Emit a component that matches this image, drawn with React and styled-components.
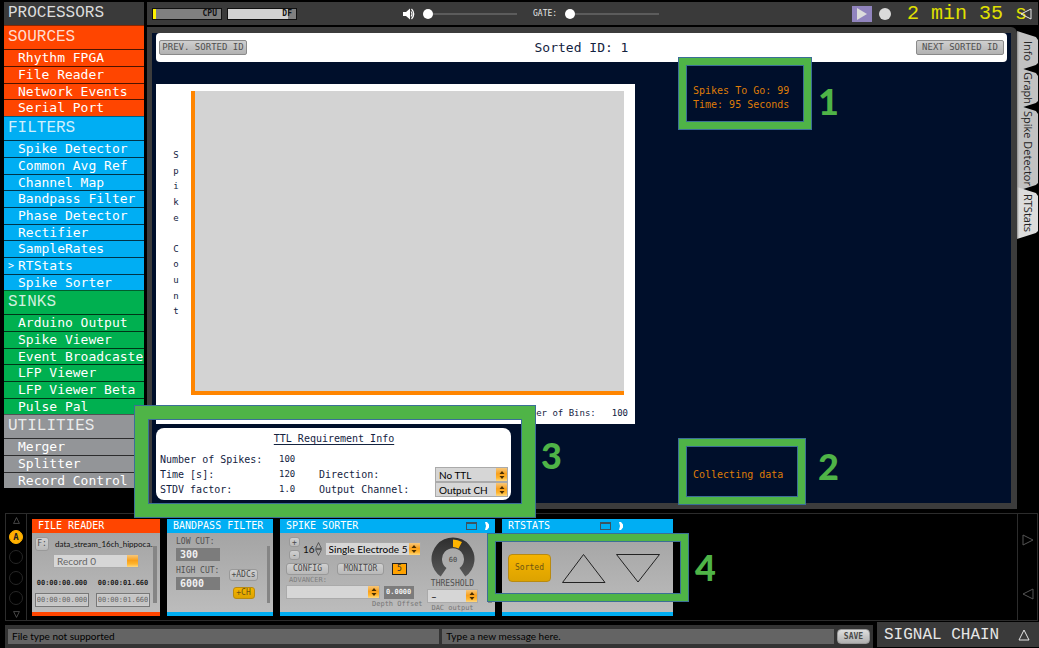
import React from "react";
import styled, { createGlobalStyle, css } from "styled-components";

const mono = `"DejaVu Sans Mono", "Liberation Mono", monospace`;
const thinMono = `"Liberation Mono", "DejaVu Sans Mono", monospace`;
const sans = `Lato, "Open Sans", sans-serif`;

const orangeGloss = "linear-gradient(#f7c77a, #f9a01b 45%, #ffb52e 75%, #ffd980)";
const green = "#4fb447";

const GlobalStyle = createGlobalStyle`
  * { box-sizing: border-box; }
  body { margin: 0; background: #000; font-family: ${mono}; }
  button, input, select { font: inherit; color: inherit; margin: 0; padding: 0; border: 0; background: none; border-radius: 0; min-width: 0; }
  h1, h2, h3, ul, p { margin: 0; padding: 0; font-weight: normal; list-style: none; }
  svg { display: block; flex: none; }
`;

const Shell = styled.div`
  position: relative;
  display: flex;
  flex-direction: column;
  min-height: 100vh;
  overflow: hidden;
`;

const Upper = styled.div`
  flex: 1;
  display: flex;
  gap: 3px;
  padding: 2px 0 0 4px;
  margin-bottom: 4px;
`;

/* Processor list */
const Sidebar = styled.nav`
  flex: 0 0 140px;
  overflow: hidden;
`;
const SideTitle = styled.h1`
  height: 23px;
  padding-left: 4px;
  font: 16px/22px ${thinMono};
  color: #dcdcdc;
  background: #3a3a3a;
`;
const Group = styled.section`
  background: ${(p) => p.$color};
`;
const GroupTitle = styled.h2`
  height: 24px;
  padding-left: 4px;
  border-top: 1px solid rgba(0, 0, 0, 0.45);
  font: 16px/22px ${thinMono};
  color: #ffffffd0;
`;
const Item = styled.li`
  height: 17px;
  padding-left: ${(p) => (p.$open ? 4 : 14)}px;
  border-top: 1px solid rgba(0, 0, 0, 0.7);
  font-size: 13px;
  line-height: 15px;
  color: #fff;
  white-space: nowrap;
  display: flex;
  &:nth-child(3n) { height: 16px; }
`;
const Marker = styled.span`
  width: 10px;
  flex: none;
  font-size: 10px;
`;

/* Control bar */
const Workspace = styled.div`
  flex: 1;
  min-width: 0;
  display: flex;
  flex-direction: column;
  gap: 2px;
`;
const ControlBar = styled.header`
  position: relative;
  height: 23px;
  margin-right: 1px;
  padding: 0 11px 0 5px;
  display: flex;
  align-items: center;
  background: #3a3a3a;
`;
const Meter = styled.div`
  width: 70px;
  height: 12px;
  margin-right: 5px;
  padding-right: 4px;
  border: 1px solid #111;
  background: linear-gradient(90deg, ${(p) => p.$fill} ${(p) => p.$level}px, #808080 ${(p) => p.$level}px);
  font: bold 8px/10px ${mono};
  color: #111;
  text-align: right;
`;
const SliderField = styled.label`
  display: flex;
  align-items: center;
  gap: 8px;
  font-size: 8px;
  color: #e6e6e6;
  margin-left: ${(p) => p.$before}px;
`;
const Slider = styled.input.attrs({ type: "range" })`
  appearance: none;
  width: 94px;
  height: 12px;
  background: linear-gradient(#5c5c5c, #5c5c5c) center / 100% 2px no-repeat;
  &::-webkit-slider-thumb {
    appearance: none;
    width: 10px;
    height: 10px;
    border-radius: 50%;
    background: #fff;
  }
`;
const Transport = styled.div`
  margin-left: auto;
  display: flex;
  align-items: center;
`;
const PlayButton = styled.button`
  width: 20px;
  height: 16px;
  display: grid;
  place-items: center;
  background: #9184be;
`;
const RecordButton = styled.button`
  width: 12px;
  height: 12px;
  margin: 0 16px 0 7px;
  border-radius: 50%;
  background: #dadada;
`;
const Clock = styled.time`
  font: 20px/22px ${thinMono};
  color: #e0e000;
  white-space: pre;
`;
const CollapseButton = styled.button`
  position: absolute;
  right: 6px;
  top: 6px;
`;

/* Visualiser frame */
const Stage = styled.div`
  flex: 1;
  display: flex;
`;
const Frame = styled.div`
  flex: 1;
  min-width: 0;
  display: flex;
  padding: 6px 6px 6px 5px;
  border-radius: 0 6px 0 0;
  background: #3c3c3c;
`;
const Canvas = styled.main`
  flex: 1;
  min-width: 0;
  display: flex;
  flex-direction: column;
  padding: 0 4px;
  background: #000f2b;
  color: #14233f;
`;
const SortHeader = styled.div`
  display: flex;
  align-items: center;
  justify-content: space-between;
  height: 29px;
  padding: 0 3px;
  border-radius: 4px;
  background: #fff;
`;
const SortTitle = styled.h2`
  font-size: 13px;
`;
const SortButton = styled.button`
  width: 88px;
  height: 15px;
  border: 1px solid #8a8a8a;
  border-radius: 2px;
  background: linear-gradient(#cfcfcf, #b2b2b2);
  font-size: 9px;
  line-height: 13px;
  color: #505050;
  white-space: nowrap;
`;
const Columns = styled.div`
  flex: 1;
  display: grid;
  grid-template-columns: minmax(0, 479fr) minmax(0, 372fr);
  padding-top: 22px;
`;
const Left = styled.div`
  display: flex;
  flex-direction: column;
  gap: 4px;
  padding-bottom: 3px;
`;
const PlotCard = styled.section`
  flex: 1;
  min-height: 340px;
  display: grid;
  grid-template: 1fr 29px / 35px 1fr;
  padding: 7px 11px 0 0;
  background: #fff;
`;
const AxisLabel = styled.div`
  height: 172px;
  margin-top: 56px;
  padding-left: 5px;
  display: flex;
  flex-direction: column;
  align-items: center;
  font-size: 9px;
  line-height: 16px;
  span { flex: 1; min-height: 0; }
`;
const Plot = styled.div`
  border: solid #ff8500;
  border-width: 0 0 4px 4px;
  background: #d3d3d3;
`;
const Bins = styled.div`
  grid-column: 2;
  display: flex;
  justify-content: flex-end;
  align-items: center;
  gap: 16px;
  padding: 7px 0 0;
  margin-right: -4px;
  font-size: 9px;
`;
const TtlCard = styled.section`
  width: 100%;
  max-width: 355px;
  height: 72px;
  padding: 4px 3px 0 4px;
  border-radius: 8px;
  background: #fff;
  font-size: 10px;
`;
const TtlTitle = styled.h3`
  margin-bottom: 6px;
  text-align: center;
  font-size: 10px;
  line-height: 14px;
  text-decoration: underline;
  text-underline-offset: 2px;
`;
const TtlGrid = styled.div`
  display: grid;
  grid-template-columns: 119px 40px 1fr 73px;
  grid-auto-rows: 15px;
  line-height: 15px;
`;
const TtlValue = styled.output`
  font-size: 9px;
`;
const Status = styled.div`
  display: flex;
  flex-direction: column;
  justify-content: space-between;
  padding: 0 0 21px 58px;
  font-size: 10px;
  line-height: 14px;
  color: #df7c08;
`;

/* Drop-down with the glossy arrow cap */
const Picker = styled.span`
  display: flex;
  width: ${(p) => p.$w}px;
  height: ${(p) => p.$h || 14}px;
  border: 1px solid #aaa;
  background: #d6d6d6;
  font: 10px/12px ${sans};
  color: ${(p) => p.$color || "#000"};
  select { appearance: none; flex: 1; padding-left: 3px; outline: 0; }
`;
const PickerCap = styled.span`
  width: 11px;
  display: grid;
  place-items: center;
  background: ${orangeGloss};
`;

function Select({ label, id, text, w, h, color, plain }) {
  return (
    <Picker $w={w} $h={h} $color={color}>
      <select id={id} aria-label={label}>
        <option>{text}</option>
      </select>
      <PickerCap>
        {!plain && (
          <svg width="6" height="8" viewBox="0 0 6 8" fill="#4a2e00">
            <path d="M3 0L5.5 3H.5zM3 8L.5 5h5z" />
          </svg>
        )}
      </PickerCap>
    </Picker>
  );
}

/* Tabs on the right edge */
const Tabs = styled.div`
  width: 22px;
  padding: 4px 1px 0 0;
  display: flex;
  flex-direction: column;
`;
const Tab = styled.button`
  height: ${(p) => p.$h}px;
  margin-bottom: -4px;
  writing-mode: vertical-rl;
  font: 11px/20px "Open Sans", sans-serif;
  color: #222;
  background: linear-gradient(90deg, #8f8f8f, ${(p) => (p.$active ? "#dcdcdc" : "#c2c2c2")} 2px);
  clip-path: polygon(0 0, 90% 6px, 100% 9px, 100% calc(100% - 8px), 90% calc(100% - 6px), 0 100%);
`;

/* Signal chain */
const Chain = styled.section`
  display: flex;
  margin: 0 1px 0 5px;
  height: 108px;
  border: 1px solid #2c2c2c;
  background: #000;
`;
const Slots = styled.div`
  width: 21px;
  border-right: 1px solid #2c2c2c;
  display: flex;
  flex-direction: column;
  align-items: center;
  justify-content: space-between;
  padding: 3px 0 2px;
`;
const Slot = styled.button`
  width: 14px;
  height: 14px;
  border: 1px solid #262626;
  border-radius: 50%;
  font: bold 9px/12px ${mono};
  ${(p) => p.$on && css`background: #ffb000; border-color: #ffb000; color: #222;`}
`;
const Editors = styled.div`
  flex: 1;
  display: flex;
  align-items: flex-start;
  gap: 7px;
  padding: 5px 0 0 5px;
`;
const Arrows = styled.div`
  width: 20px;
  border-left: 1px solid #2c2c2c;
  display: flex;
  flex-direction: column;
  align-items: center;
  justify-content: space-between;
  padding: 20px 0;
`;
const Editor = styled.article`
  flex: none;
  width: ${(p) => p.$w}px;
  height: 97px;
  display: flex;
  flex-direction: column;
  background: linear-gradient(#a0a0a0, #bcbcbc);
  border-bottom: 4px solid ${(p) => p.$color};
`;
const EditorHead = styled.header`
  height: 14px;
  padding: 0 ${(p) => p.$end || 0}px 0 6px;
  display: flex;
  align-items: center;
  gap: 8px;
  background: ${(p) => p.$color};
  color: #fff;
`;
const EditorTitle = styled.h3`
  flex: 1;
  font-size: 10px;
  line-height: 14px;
`;
const EditorBody = styled.div`
  flex: 1;
  display: flex;
  padding: 4px 3px 0 ${(p) => p.$start}px;
  gap: ${(p) => p.$gap || 0}px;
`;
const Grip = styled.span`
  width: 4px;
  height: 57px;
  margin: 9px 0 0 auto;
  background: #858585;
`;
const Col = styled.div`
  display: flex;
  flex-direction: column;
  align-items: ${(p) => p.$align || "flex-start"};
  width: ${(p) => (p.$w ? p.$w + "px" : "auto")};
  gap: ${(p) => p.$gap || 0}px;
  padding-top: ${(p) => p.$top || 0}px;
`;
const Row = styled.div`
  display: flex;
  align-items: center;
  gap: ${(p) => p.$gap || 0}px;
  padding-left: ${(p) => p.$start || 0}px;
`;
const SmallButton = styled.button`
  width: ${(p) => p.$w}px;
  height: ${(p) => p.$h || 12}px;
  border: 1px solid ${(p) => (p.$on ? "#b98a10" : "#999")};
  border-radius: 3px;
  background: ${(p) => (p.$on ? "linear-gradient(#f5b400, #dda300)" : "linear-gradient(#d0d0d0, #b9b9b9)")};
  font-size: 8px;
  line-height: 10px;
  color: ${(p) => (p.$on ? "#6d5510" : "#4a4a4a")};
  white-space: nowrap;
`;
const FileName = styled.span`
  white-space: nowrap;
  font: 8px/14px ${sans};
  color: #111;
`;
const TimeText = styled.span`
  width: 54px;
  text-align: center;
  font: bold 7px/12px ${mono};
  color: #222;
`;
const TimeField = styled.input`
  width: 54px;
  height: 14px;
  border: 1px solid #777;
  outline: 1px solid #ccc;
  outline-offset: -2px;
  background: #c6c6c6;
  text-align: center;
  font: 7px/12px ${mono};
  color: #666;
`;
const Caption = styled.label`
  font-size: ${(p) => p.$size || 8}px;
  line-height: 10px;
  color: ${(p) => p.$color || "#505050"};
  white-space: nowrap;
`;
const ValueField = styled.input`
  width: ${(p) => p.$w}px;
  height: ${(p) => p.$h || 13}px;
  padding-left: ${(p) => p.$pad || 4}px;
  background: #7c7c7c;
  font: bold ${(p) => p.$size || 10}px/12px ${mono};
  color: #f0f0f0;
`;
const Channel = styled.span`
  width: 15px;
  height: 12px;
  border: 1px solid #222;
  background: #ffa200;
  font: 8px/10px ${mono};
  text-align: center;
  color: #333;
`;
const Count = styled.span`
  font: 10px/14px ${sans};
  color: #111;
`;
const SortedButton = styled(SmallButton)`
  border-radius: 4px;
`;

/* Message bar */
const Footer = styled.footer`
  display: flex;
  gap: 4px;
  height: 26px;
  margin-top: 1px;
  padding-left: 5px;
`;
const Messages = styled.div`
  flex: 1;
  display: flex;
  align-items: center;
  gap: 3px;
  height: 23px;
  margin-top: 3px;
  padding: 0 3px;
  background: #333;
`;
const Message = styled.input`
  flex: ${(p) => p.$grow} 1 0;
  height: 15px;
  padding-left: 4px;
  background: #646464;
  font: 10px/15px ${sans};
  color: #000;
`;
const SaveButton = styled(SmallButton)`
  border-radius: 4px;
  font-weight: bold;
  background: linear-gradient(#dedede, #b0b0b0);
`;
const ChainTitle = styled.button`
  width: 162px;
  height: 25px;
  padding: 0 9px 0 7px;
  display: flex;
  align-items: center;
  justify-content: space-between;
  background: #3a3a3a;
  font: 16px/24px ${thinMono};
  color: #e6e6e6;
`;

/* Numbered call-outs drawn over the interface */
const Callout = styled.div`
  position: absolute;
  left: ${(p) => p.$x}px;
  top: ${(p) => p.$y}px;
  width: ${(p) => p.$w}px;
  height: ${(p) => p.$h}px;
  border: 1px solid #3b6f96;
  box-shadow: inset 0 0 0 ${(p) => p.$t - 2}px ${green}, inset 0 0 0 ${(p) => p.$t - 1}px #3b6f96;
  pointer-events: none;
`;
const CalloutNumber = styled.span`
  position: absolute;
  left: ${(p) => p.$x}px;
  top: ${(p) => p.$y}px;
  font: 900 36px/36px Lato, sans-serif;
  color: ${green};
`;

const turns = { up: 0, right: 90, down: 180, left: 270 };
function Tri({ dir = "up", size = 12, color = "#555" }) {
  return (
    <svg width={size} height={size} viewBox="0 0 12 12" fill="none" stroke={color}>
      <path d="M6 1L11 11H1z" transform={`rotate(${turns[dir]} 6 6)`} />
    </svg>
  );
}

function HeadIcons() {
  return (
    <>
      <svg width="11" height="9" viewBox="0 0 11 9">
        <rect x=".5" y=".5" width="10" height="7" fill="none" stroke="#3c5460" />
        <path d="M0 0h11v2H0z" fill="#3c5460" />
      </svg>
      <svg width="4" height="8" viewBox="0 0 4 8" fill="#fff">
        <path d="M0 0h2l2 2.500v3L2 8H0l1-4z" />
      </svg>
    </>
  );
}

function Knob() {
  return (
    <svg width="44" height="42" viewBox="0 0 44 42">
      <defs>
        <linearGradient id="knob" x1="0" y1="0" x2="0" y2="1">
          <stop offset="0" stopColor="#2e2e2e" />
          <stop offset="1" stopColor="#585858" />
        </linearGradient>
      </defs>
      <path
        d="M9.7 39.6A21.5 21.5 0 1 1 34.3 39.6L28.5 31A11 11 0 1 0 15.500 31z"
        fill="url(#knob)"
      />
      <path d="M22 2.500A19.5 19.5 0 0 1 31 5L27.500 11.500A12 12 0 0 0 22 10z" fill="#ffb400" />
      <text x="22" y="25" textAnchor="middle" fontSize="7" fontFamily="DejaVu Sans Mono" fill="#444">
        60
      </text>
    </svg>
  );
}

const groups = [
  ["SOURCES", "#ff4500", ["Rhythm FPGA", "File Reader", "Network Events", "Serial Port"]],
  [
    "FILTERS",
    "#00aef3",
    ["Spike Detector", "Common Avg Ref", "Channel Map", "Bandpass Filter", "Phase Detector", "Rectifier", "SampleRates", "RTStats", "Spike Sorter"],
  ],
  ["SINKS", "#00b050", ["Arduino Output", "Spike Viewer", "Event Broadcaste", "LFP Viewer", "LFP Viewer Beta", "Pulse Pal"]],
  ["UTILITIES", "#939598", ["Merger", "Splitter", "Record Control"]],
];

const callouts = [
  { n: 1, x: 678, y: 57, w: 134, h: 73, t: 9, nx: 818, ny: 83 },
  { n: 2, x: 678, y: 438, w: 128, h: 67, t: 9, nx: 818, ny: 448 },
  { n: 3, x: 134, y: 405, w: 402, h: 113, t: 15, nx: 541, ny: 437 },
  { n: 4, x: 487, y: 533, w: 202, h: 69, t: 9, nx: 695, ny: 549 },
];

export default function App() {
  return (
    <Shell>
      <GlobalStyle />
      <Upper>
        <Sidebar>
          <SideTitle>PROCESSORS</SideTitle>
          {groups.map(([title, color, items]) => (
            <Group key={title} $color={color}>
              <GroupTitle>{title}</GroupTitle>
              <ul>
                {items.map((item) => (
                  <Item key={item} $open={item === "RTStats"}>
                    {item === "RTStats" && <Marker>&gt;</Marker>}
                    {item}
                  </Item>
                ))}
              </ul>
            </Group>
          ))}
        </Sidebar>

        <Workspace>
          <ControlBar>
            <Meter $fill="#fff200" $level={3}>CPU</Meter>
            <Meter $fill="#d2d2d2" $level={60}>DF</Meter>
            <SliderField $before={101}>
              <svg width="12" height="12" viewBox="0 0 12 12" fill="#fff" aria-label="Volume">
                <path d="M0 4h3l4-3.5v11L3 8H0z" />
                <path d="M8 3.5Q10 6 8 8.5M8.500 1Q13 6 8.500 11" fill="none" stroke="#fff" strokeWidth="1.200" />
              </svg>
              <Slider defaultValue={0} aria-label="Volume" />
            </SliderField>
            <SliderField $before={16}>
              GATE:
              <Slider defaultValue={0} />
            </SliderField>
            <Transport>
              <PlayButton aria-label="Play">
                <svg width="10" height="12" viewBox="0 0 10 12" fill="#dcdcdc">
                  <path d="M0 0l10 6-10 6z" />
                </svg>
              </PlayButton>
              <RecordButton aria-label="Record" />
              <Clock>2 min 35 s</Clock>
            </Transport>
            <CollapseButton aria-label="Collapse">
              <Tri dir="left" color="#e8e8e8" />
            </CollapseButton>
          </ControlBar>

          <Stage>
            <Frame>
              <Canvas>
                <SortHeader>
                  <SortButton>PREV. SORTED ID</SortButton>
                  <SortTitle>Sorted ID: 1</SortTitle>
                  <SortButton>NEXT SORTED ID</SortButton>
                </SortHeader>
                <Columns>
                  <Left>
                    <PlotCard>
                      <AxisLabel>
                        {[..."Spike Count"].map((c, i) => (
                          <span key={i}>{c}</span>
                        ))}
                      </AxisLabel>
                      <Plot />
                      <Bins>
                        <span>Number of Bins:</span>
                        <span>100</span>
                      </Bins>
                    </PlotCard>
                    <TtlCard>
                      <TtlTitle>TTL Requirement Info</TtlTitle>
                      <TtlGrid>
                        <span>Number of Spikes:</span>
                        <TtlValue>100</TtlValue>
                        <span />
                        <span />
                        <span>Time [s]:</span>
                        <TtlValue>120</TtlValue>
                        <label htmlFor="direction">Direction:</label>
                        <Select id="direction" text="No TTL" w={73} h={15} />
                        <span>STDV factor:</span>
                        <TtlValue>1.0</TtlValue>
                        <label htmlFor="output">Output Channel:</label>
                        <Select id="output" text="Output CH" w={73} h={15} />
                      </TtlGrid>
                    </TtlCard>
                  </Left>
                  <Status>
                    <div>
                      <p>Spikes To Go: 99</p>
                      <p>Time: 95 Seconds</p>
                    </div>
                    <p>Collecting data</p>
                  </Status>
                </Columns>
              </Canvas>
            </Frame>
            <Tabs>
              <Tab $h={40}>Info</Tab>
              <Tab $h={42}>Graph</Tab>
              <Tab $h={86}>Spike Detector</Tab>
              <Tab $h={52} $active>RTStats</Tab>
            </Tabs>
          </Stage>
        </Workspace>
      </Upper>

      <Chain>
        <Slots>
          <Tri size={7} color="#777" />
          <Slot $on>A</Slot>
          <Slot aria-label="Chain B" />
          <Slot aria-label="Chain C" />
          <Slot aria-label="Chain D" />
          <Tri size={7} dir="down" color="#777" />
        </Slots>
        <Editors>
          <Editor $w={128} $color="#ff4500">
            <EditorHead $color="#ff4500">
              <EditorTitle>FILE READER</EditorTitle>
            </EditorHead>
            <EditorBody $start={3}>
              <Col $w={116}>
                <Row $gap={6}>
                  <SmallButton $w={14} $h={14}>F:</SmallButton>
                  <FileName>data_stream_16ch_hippoca...</FileName>
                </Row>
                <Col $top={3}>
                  <Row $start={18}>
                    <Select label="Record" text="Record 0" w={86} color="#666" plain />
                  </Row>
                </Col>
                <Col $top={9} $gap={4}>
                  <Row $gap={7}>
                    <TimeText>00:00:00.000</TimeText>
                    <TimeText>00:00:01.660</TimeText>
                  </Row>
                  <Row $gap={7}>
                    <TimeField defaultValue="00:00:00.000" aria-label="Start" />
                    <TimeField defaultValue="00:00:01.660" aria-label="End" />
                  </Row>
                </Col>
              </Col>
              <Grip />
            </EditorBody>
          </Editor>

          <Editor $w={106} $color="#00aef3">
            <EditorHead $color="#00aef3">
              <EditorTitle>BANDPASS FILTER</EditorTitle>
            </EditorHead>
            <EditorBody $start={9} $gap={9}>
              <Col $w={46} $gap={1}>
                <Caption htmlFor="low">LOW CUT:</Caption>
                <ValueField id="low" $w={44} defaultValue="300" />
                <Col $top={4} $gap={1}>
                  <Caption htmlFor="high">HIGH CUT:</Caption>
                  <ValueField id="high" $w={44} defaultValue="6000" />
                </Col>
              </Col>
              <Col $top={32} $gap={6} $align="center">
                <SmallButton $w={29}>+ADCs</SmallButton>
                <SmallButton $w={22} $on>+CH</SmallButton>
              </Col>
              <Grip />
            </EditorBody>
          </Editor>

          <Editor $w={215} $color="#00aef3">
            <EditorHead $color="#00aef3" $end={6}>
              <EditorTitle>SPIKE SORTER</EditorTitle>
              <HeadIcons />
            </EditorHead>
            <EditorBody $start={6} $gap={5}>
              <Col $w={136}>
                <Row $start={3} $gap={3}>
                  <Col $gap={3}>
                    <SmallButton $w={11} $h={10}>+</SmallButton>
                    <SmallButton $w={11} $h={10}>-</SmallButton>
                  </Col>
                  <Row>
                    <Count>16</Count>
                    <Col>
                      <Tri size={7} color="#222" />
                      <Tri size={7} dir="down" color="#222" />
                    </Col>
                  </Row>
                  <Select label="Electrode" text="Single Electrode 5" w={96} />
                </Row>
                <Col $top={3}>
                  <Row $gap={8}>
                    <SmallButton $w={43}>CONFIG</SmallButton>
                    <SmallButton $w={47}>MONITOR</SmallButton>
                    <Channel>5</Channel>
                  </Row>
                </Col>
                <Row $start={3}>
                  <Caption $size={7} $color="#808080" htmlFor="advancer">ADVANCER:</Caption>
                </Row>
                <Row $gap={4}>
                  <Select id="advancer" text="" w={94} />
                  <ValueField $w={30} $size={7} $pad={2} defaultValue="0.0000" aria-label="Depth Offset" />
                </Row>
                <Row $start={86}>
                  <Caption as="span" $size={7} $color="#777">Depth Offset</Caption>
                </Row>
              </Col>
              <Col $align="center">
                <Knob />
                <Caption as="span">THRESHOLD</Caption>
                <Select id="dac" text="–" w={51} />
                <Caption $size={7} $color="#777" htmlFor="dac">DAC output</Caption>
              </Col>
              <Grip />
            </EditorBody>
          </Editor>

          <Editor $w={171} $color="#00aef3">
            <EditorHead $color="#00aef3" $end={50}>
              <EditorTitle>RTSTATS</EditorTitle>
              <HeadIcons />
            </EditorHead>
            <EditorBody $start={6} $gap={11}>
              <Col $top={17}>
                <SortedButton $w={43} $h={28} $on>Sorted</SortedButton>
              </Col>
              <Col $top={17}>
                <svg width="98" height="29" viewBox="0 0 98 29" fill="none" stroke="#222">
                  <path d="M.5 28.500L21.500.5l21.500 28zM54.500.5h43L76 28z" />
                </svg>
              </Col>
              <Grip />
            </EditorBody>
          </Editor>
        </Editors>
        <Arrows>
          <Tri dir="right" />
          <Tri dir="left" />
        </Arrows>
      </Chain>

      <Footer>
        <Messages>
          <Message $grow={431} defaultValue="File type not supported" aria-label="Status" />
          <Message $grow={391} defaultValue="Type a new message here." aria-label="Message" />
          <SaveButton $w={33} $h={15}>SAVE</SaveButton>
        </Messages>
        <ChainTitle>
          SIGNAL CHAIN
          <Tri color="#e6e6e6" />
        </ChainTitle>
      </Footer>

      {callouts.map((c) => (
        <React.Fragment key={c.n}>
          <Callout $x={c.x} $y={c.y} $w={c.w} $h={c.h} $t={c.t} />
          <CalloutNumber $x={c.nx} $y={c.ny}>{c.n}</CalloutNumber>
        </React.Fragment>
      ))}
    </Shell>
  );
}
